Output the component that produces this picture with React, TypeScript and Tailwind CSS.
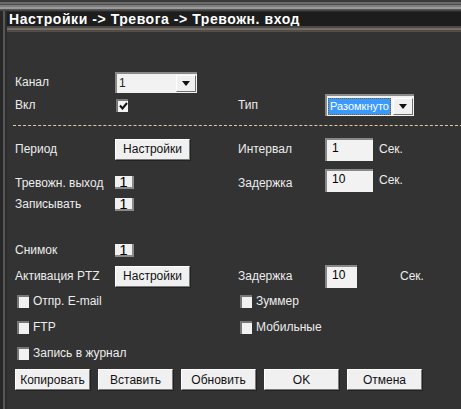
import React from "react";

const FONT = { fontFamily: '"Liberation Sans", Arial, sans-serif' };

// Bevelled light control, like the old DVR web UI
function Btn({ children, w = "w-[75px]" }: { children: React.ReactNode; w?: string }) {
  return (
    <div
      className={`${w} h-[21px] flex-shrink-0 flex items-center justify-center bg-[#f0f0f0] text-[12px] text-[#111] border border-t-white border-l-white border-r-[#7a7a7a] border-b-[#7a7a7a] shadow-[1px_1px_0_#222]`}
    >
      {children}
    </div>
  );
}

function Num({ v }: { v: string }) {
  return (
    <div className="w-[19px] h-[13px] flex-shrink-0 bg-[#f0f0f0] flex items-center justify-center text-[15px] leading-none text-black border-r-2 border-b-2 border-[#8a8a8a]">
      {v}
    </div>
  );
}

function Field({ v, w = "w-[48px]" }: { v: string; w?: string }) {
  return (
    <div className={`${w} h-[23px] flex-shrink-0 bg-[#f2f2f2] border-t-2 border-l-2 border-[#888] px-[5px] pt-[2px] text-[12px] leading-none text-black`}>
      {v}
    </div>
  );
}

function Check({ on = false }: { on?: boolean }) {
  return (
    <div className="w-[12px] h-[13px] flex-shrink-0 bg-[#f2f2f2] border-t-2 border-l-2 border-[#777] flex items-center justify-center">
      {on && (
        <svg width="9" height="8" viewBox="0 0 9 8">
          <path d="M1 3.5 L3.5 6.5 L8 1" stroke="#111" strokeWidth="2" fill="none" />
        </svg>
      )}
    </div>
  );
}

function Arrow() {
  return (
    <div className="w-[20px] h-[17px] flex-shrink-0 bg-[#f0f0f0] border border-t-white border-l-white border-r-[#707070] border-b-[#707070] flex items-center justify-center">
      <svg width="8" height="5" viewBox="0 0 8 5">
        <path d="M0 0 H8 L4 5 Z" fill="#111" />
      </svg>
    </div>
  );
}

function Row({ h, children }: { h: string; children: React.ReactNode }) {
  return <div className={`${h} grid grid-cols-[100px_123px_87px_1fr] items-center`}>{children}</div>;
}

function L({ children }: { children: React.ReactNode }) {
  return <span className="text-[12px] text-[#ececec] whitespace-nowrap">{children}</span>;
}

function CheckLabel({ children }: { children: React.ReactNode }) {
  return (
    <div className="flex items-center gap-[4px] pl-[2px] whitespace-nowrap">
      <Check />
      <L>{children}</L>
    </div>
  );
}

export default function App() {
  return (
    <div className="w-[461px] h-[409px] bg-[#333333] overflow-hidden flex flex-col" style={FONT}>
      {/* top frame strip */}
      <div className="h-[2px] bg-[#3a3a3a]" />
      <div className="h-[2px] bg-[#6a6a6a]" />
      <div className="h-[1px] bg-[#4e4e4e]" />
      <div className="h-[2px] bg-[#7c7c7c]" />
      <div className="h-[2px] bg-[#9a9a9a]" />
      <div className="h-[1px] bg-[#555]" />
      <div className="h-[1px] bg-[#444]" />

      <div className="flex-1 flex">
        {/* left frame */}
        <div className="w-[3px] bg-[#262626]" />
        <div className="w-[2px] bg-[#575757]" />
        <div className="w-[2px] bg-[#2c2c2c]" />

        <div className="flex-1 flex flex-col">
          {/* title bar */}
          <div className="h-[15px] bg-[#1d1d1d] flex items-center pl-[2px] border-t border-[#2a2a2a]">
            <span className="text-[14px] font-bold text-white tracking-[0.55px] leading-none">
              Настройки -&gt; Тревога -&gt; Тревожн. вход
            </span>
          </div>
          <div className="h-[2px] bg-[#4a4a4a]" />
          <div className="h-[2px] bg-[#7a6b5c]" />
          <div className="h-[2px] bg-[#4e4e4e]" />

          <div className="pl-[8px] flex flex-col">
            <div className="h-[39px]" />
            {/* Канал */}
            <Row h="h-[22px]">
              <L>Канал</L>
              <div className="w-[82px] h-[21px] bg-[#f2f2f2] border-t-2 border-l-2 border-[#8a8a8a] flex items-center justify-between pl-[2px] pr-[1px]">
                <span className="text-[12px] text-[#222]">1</span>
                <Arrow />
              </div>
              <span />
              <span />
            </Row>
            {/* Вкл */}
            <Row h="h-[24px]">
              <L>Вкл</L>
              <div className="pl-[1px]">
                <Check on />
              </div>
              <L>Тип</L>
              <div className="w-[89px] h-[22px] bg-[#f2f2f2] border-t-2 border-l-2 border-[#8a8a8a] flex items-center justify-between pl-[1px] pr-[1px]">
                <span className="h-[17px] px-[1px] bg-[#3b99fc] border border-dotted border-[#8a5a00] text-[11px] leading-[15px] text-white whitespace-nowrap">
                  Разомкнуто
                </span>
                <Arrow />
              </div>
            </Row>
            <div className="h-[8px]" />
            <div className="h-0 border-t border-dashed border-[#e0c8a0] -mr-[2px] ml-[-2px]" />
            <div className="h-[11px]" />

            {/* Период */}
            <Row h="h-[24px]">
              <L>Период</L>
              <Btn>Настройки</Btn>
              <L>Интервал</L>
              <div className="flex items-center gap-[6px]">
                <Field v="1" />
                <L>Сек.</L>
              </div>
            </Row>
            <div className="h-[5px]" />
            {/* Тревожн. выход */}
            <Row h="h-[24px]">
              <div className="pt-[4px]">
                <L>Тревожн. выход</L>
              </div>
              <div className="pt-[4px]">
                <Num v="1" />
              </div>
              <div className="pt-[3px]">
                <L>Задержка</L>
              </div>
              <div className="flex items-center gap-[6px]">
                <Field v="10" />
                <L>Сек.</L>
              </div>
            </Row>
            <div className="h-[3px]" />
            <Row h="h-[22px]">
              <L>Записывать</L>
              <Num v="1" />
              <span />
              <span />
            </Row>
            <div className="h-[23px]" />
            <Row h="h-[24px]">
              <L>Снимок</L>
              <Num v="1" />
              <span />
              <span />
            </Row>
            <div className="h-[2px]" />
            {/* PTZ */}
            <Row h="h-[24px]">
              <L>Активация PTZ</L>
              <Btn>Настройки</Btn>
              <L>Задержка</L>
              <div className="flex items-center gap-[43px]">
                <Field v="10" w="w-[32px]" />
                <L>Сек.</L>
              </div>
            </Row>
            <Row h="h-[26px]">
              <CheckLabel>Отпр. E-mail</CheckLabel>
              <span />
              <CheckLabel>Зуммер</CheckLabel>
              <span />
            </Row>
            <Row h="h-[26px]">
              <CheckLabel>FTP</CheckLabel>
              <span />
              <CheckLabel>Мобильные</CheckLabel>
              <span />
            </Row>
            <Row h="h-[26px]">
              <CheckLabel>Запись в журнал</CheckLabel>
              <span />
              <span />
              <span />
            </Row>
            <div className="h-[3px]" />
            <div className="flex gap-[8px]">
              <Btn>Копировать</Btn>
              <Btn>Вставить</Btn>
              <Btn>Обновить</Btn>
              <Btn>OK</Btn>
              <Btn>Отмена</Btn>
            </div>
          </div>
        </div>
      </div>
    </div>
  );
}
